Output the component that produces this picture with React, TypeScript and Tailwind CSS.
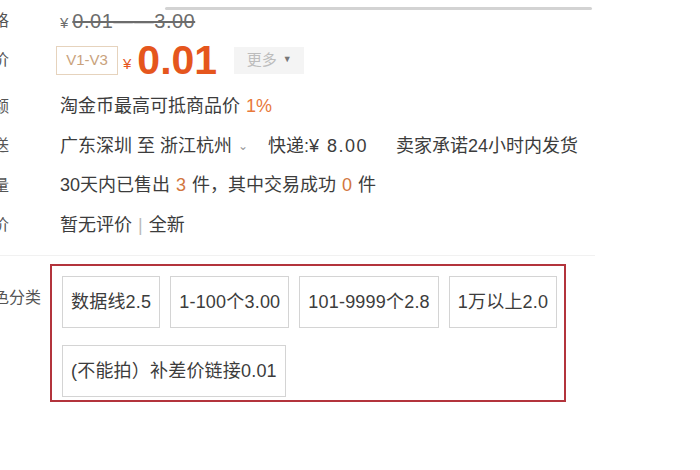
import React from "react";

const skus = ["数据线2.5", "1-100个3.00", "101-9999个2.8", "1万以上2.0", "(不能拍）补差价链接0.01"];

function Label({ text }: { text: string }) {
  return (
    <div className="-ml-[23px] w-[83px] shrink-0 whitespace-nowrap text-[16px] text-[#555]">
      {text}
    </div>
  );
}

function Row({ label, children }: { label: string; children: React.ReactNode }) {
  return (
    <div className="flex h-[39.5px] items-center">
      <Label text={label} />
      <div className="flex items-center whitespace-nowrap text-[18px] text-[#3c3c3c]">{children}</div>
    </div>
  );
}

export default function App() {
  return (
    <div
      className="relative h-[470px] w-[700px] overflow-hidden bg-white"
      style={{ fontFamily: '"Liberation Sans", "Noto Sans CJK SC", sans-serif' }}
    >
      <div className="ml-[165px] mt-[7px] h-[3px] w-[427px] rounded-full bg-[#d3d3d3]" />

      <div className="flex h-[22px] items-center">
        <Label text="价格" />
        <div className="flex items-baseline text-[#6c6c6c]">
          <span className="mr-[4px] text-[15px]">¥</span>
          <span className="text-[20px] tracking-[0.5px] line-through">0.01——3.00</span>
        </div>
      </div>

      <div className="mt-[12px] flex h-[32px] items-center">
        <Label text="现价" />
        <div className="-ml-[4px] flex items-center">
          <div className="flex h-[29px] w-[62px] items-center justify-center border border-[#e6d3bd] text-[15px] text-[#c9a27c]">
            V1-V3
          </div>
          <span className="ml-[5px] mt-[8px] text-[15px] text-[#e5561d]">¥</span>
          <span className="ml-[6px] text-[41px] font-bold leading-none text-[#e5561d]">0.01</span>
          <div className="ml-[17px] flex h-[27px] w-[70px] items-center justify-center gap-[6px] bg-[#f4f4f4] text-[15px] text-[#bdbdbd]">
            <span>更多</span>
            <span className="text-[9px] text-[#777]">▼</span>
          </div>
        </div>
      </div>

      <div className="mt-[11px]">
        <Row label="抵额">
          <span>淘金币最高可抵商品价</span>
          <span className="ml-[6px] text-[#e8793a]">1%</span>
        </Row>
        <Row label="配送">
          <span>广东深圳 至 浙江杭州</span>
          <span className="ml-[6px] text-[12px] text-[#999]">⌄</span>
          <span className="ml-[20px]">快递:¥</span>
          <span className="ml-[8px] tracking-[1.5px]">8.00</span>
          <span className="ml-[28px]">卖家承诺24小时内发货</span>
        </Row>
        <Row label="销量">
          <span>30天内已售出</span>
          <span className="mx-[6px] text-[#d2763e]">3</span>
          <span>件，其中交易成功</span>
          <span className="mx-[6px] text-[#d2763e]">0</span>
          <span>件</span>
        </Row>
        <Row label="评价">
          <span>暂无评价</span>
          <span className="mx-[6px] text-[#bbb]">|</span>
          <span>全新</span>
        </Row>
      </div>

      <div className="mt-[10px] w-[595px] border-t border-[#f1f1f1]" />

      <div className="mt-[8px] flex">
        <div className="pt-[22px]">
          <div className="-ml-[23px] w-[73px] whitespace-nowrap text-[16px] text-[#555]">颜色分类</div>
        </div>
        <div className="w-[516px] border-2 border-[#b3343c] pb-[3px] pl-[10px] pt-[10px]">
          <div className="flex flex-wrap gap-x-[10px] gap-y-[17px]">
            {skus.map((s) => (
              <div
                key={s}
                className="flex h-[52px] items-center border border-[#d4d4d4] px-[8px] text-[18px] tracking-[0.2px] text-[#3c3c3c]"
              >
                {s}
              </div>
            ))}
          </div>
        </div>
      </div>
    </div>
  );
}
